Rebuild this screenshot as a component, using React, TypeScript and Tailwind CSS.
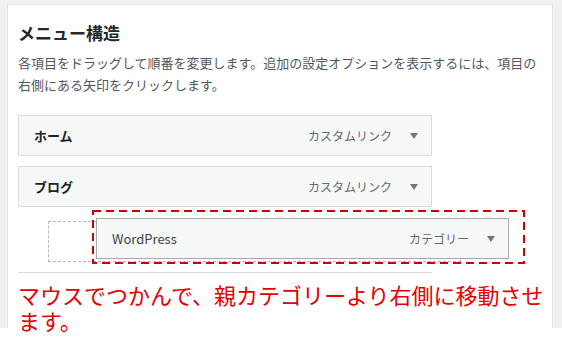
import React from "react"

function Arrow() {
  return (
    <svg viewBox="0 0 8 6" className="w-[8px] h-[6px]">
      <path d="M0 0 H8 L4 6 Z" fill="#72777c" />
    </svg>
  )
}

function MenuItem({ title, type, bold = true }: { title: string; type: string; bold?: boolean }) {
  return (
    <div className="h-[41px] border border-[#dcdcde] bg-[#f6f7f7] flex items-center justify-between pl-[15px] pr-[13px]">
      <span className={bold ? "text-[13px] font-bold text-[#1d2327]" : "text-[13px] text-[#3c434a]"}>{title}</span>
      <div className="flex items-center gap-[18px]">
        <span className="text-[12px] text-[#646970]">{type}</span>
        <Arrow />
      </div>
    </div>
  )
}

export default function App() {
  return (
    <div className="w-[562px] h-[348px] bg-white overflow-hidden font-['Noto_Sans_CJK_JP',sans-serif]">
      <div className="h-[328px] bg-[#f1f1f1] pl-[7px] pr-[9px] pt-[4px]">
        <div className="h-[324px] bg-white border border-b-0 border-[#e2e4e7] pl-[10px] pt-[16px]">
          <h2 className="text-[17px] leading-[24px] font-semibold text-[#23282d]">メニュー構造</h2>
          <p className="mt-[7px] w-[530px] text-[13px] leading-[22px] text-[#50575e]">
            各項目をドラッグして順番を変更します。追加の設定オプションを表示するには、項目の右側にある矢印をクリックします。
          </p>

          <div className="mt-[19px] w-[414px] flex flex-col gap-[10px]">
            <MenuItem title="ホーム" type="カスタムリンク" />
            <MenuItem title="ブログ" type="カスタムリンク" />
          </div>

          {/* drop placeholder with the dragged item over it */}
          <div className="relative mt-[14px] w-[414px]">
            <div className="ml-[30px] w-[413px] h-[41px] border border-dashed border-[#b4b9be]" />
            <div className="absolute left-[74px] top-[-11px] w-[433px] h-[54px]">
              <div className="absolute left-[4px] top-[8px] w-[413px] h-[41px] border border-[#a7aaad] bg-[#f6f7f7] flex items-center justify-between pl-[15px] pr-[13px]">
                <span className="text-[13px] text-[#3c434a]">WordPress</span>
                <div className="flex items-center gap-[18px]">
                  <span className="text-[12px] text-[#646970]">カテゴリー</span>
                  <Arrow />
                </div>
              </div>
              <svg className="absolute inset-0" width="433" height="54">
                <rect x="1" y="1" width="431" height="52" fill="none" stroke="#cc0000" strokeWidth="2" strokeDasharray="8 5" />
              </svg>
            </div>
          </div>

          <div className="mt-[10px] w-[414px] border-t border-[#dcdcde]" />

          <p className="mt-[8px] w-[530px] text-[22px] leading-[26px] text-[#e60000]">
            マウスでつかんで、親カテゴリーより右側に移動させます。
          </p>
        </div>
      </div>
    </div>
  )
}
